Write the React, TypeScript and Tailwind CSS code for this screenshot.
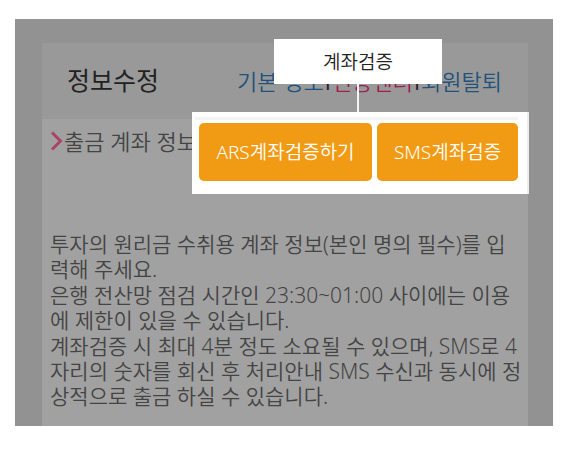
const notices = [
  '투자의 원리금 수취용 계좌 정보(본인 명의 필수)를 입\u200b력해 주세요.',
  '은행 전산망 점검 시간인 23:30~01:00 사이에는 이용\u200b에 제한이 있을 수 있습니다.',
  '계좌검증 시 최대 4분 정도 소요될 수 있으며, SMS로 4자리의 숫자를 회신 후 처리안내 SMS 수신과 동시에 정상적으로 출금 하실 수 있습니다.',
];

function Header() {
  return (
    <header className="flex h-[76px] items-center justify-between bg-[#999999] pr-[26px] pl-[25px]">
      <h1 className="text-[25px] font-normal text-[#222222]">정보수정</h1>
      <nav className="flex text-[22px] whitespace-nowrap text-[#22527a]">
        <a href="#basic">기본 정보</a>
        <span className="px-px font-['Open_Sans',sans-serif] font-normal text-[#222222]">I</span>
        <a href="#auth" className="text-[#9c2050]">인증센터</a>
        <span className="px-px font-['Open_Sans',sans-serif] font-normal text-[#222222]">I</span>
        <a href="#leave">회원탈퇴</a>
      </nav>
    </header>
  );
}

function VerifyPanel() {
  return (
    <div className="absolute top-[93px] right-6 h-[82px] w-[337px] border-r-2 border-[#eeeeee] bg-white pt-[5px] pr-[9px] pl-[3px]">
      <div className="h-[3px] bg-[#f4f4f4]" />
      <div className="mt-[3px] flex gap-[5px] pl-1 text-[19px] whitespace-nowrap text-white">
        <button type="button" className="h-[58px] w-[173px] rounded-[5px] bg-[#f19a13]">ARS계좌검증하기</button>
        <button type="button" className="h-[58px] w-[141px] rounded-[5px] bg-[#f19a13]">SMS계좌검증</button>
      </div>
    </div>
  );
}

function Callout() {
  return (
    <div className="absolute top-5 right-[111px] flex w-[168px] flex-col items-center">
      <div className="flex h-[45px] w-full items-center justify-center bg-white pt-0.5 text-[19px] text-[#222222]">
        계좌검증
      </div>
      <div className="h-7 w-0.5 bg-[#f4f4f4]" />
    </div>
  );
}

export default function App() {
  return (
    <main className="bg-white pt-[19px] pr-[17px] pb-11 pl-[15px] font-['Noto_Sans','Noto_Sans_CJK_KR',sans-serif] font-[350]">
      <div className="relative bg-[#929292] pt-6 pr-[25px] pl-[27px]">
        <section className="bg-[#a1a1a1] pb-[17px]">
          <Header />
          <div className="pr-1.5 pl-2 text-[21px] leading-[25px] text-[#444444]">
            <h2 className="flex h-[44px] items-center text-[22px]">
              <svg width="14" height="20" viewBox="0 0 14 20" fill="none" stroke="#a94468" strokeWidth="3" aria-hidden="true">
                <path d="M2 1.5 10.5 10 2 18.5" />
              </svg>
              출금 계좌 정보
            </h2>
            <div className="mt-[69px] flex flex-col gap-px">
              {notices.map((text) => (
                <p key={text}>{text}</p>
              ))}
            </div>
          </div>
        </section>
        <VerifyPanel />
        <Callout />
      </div>
    </main>
  );
}
